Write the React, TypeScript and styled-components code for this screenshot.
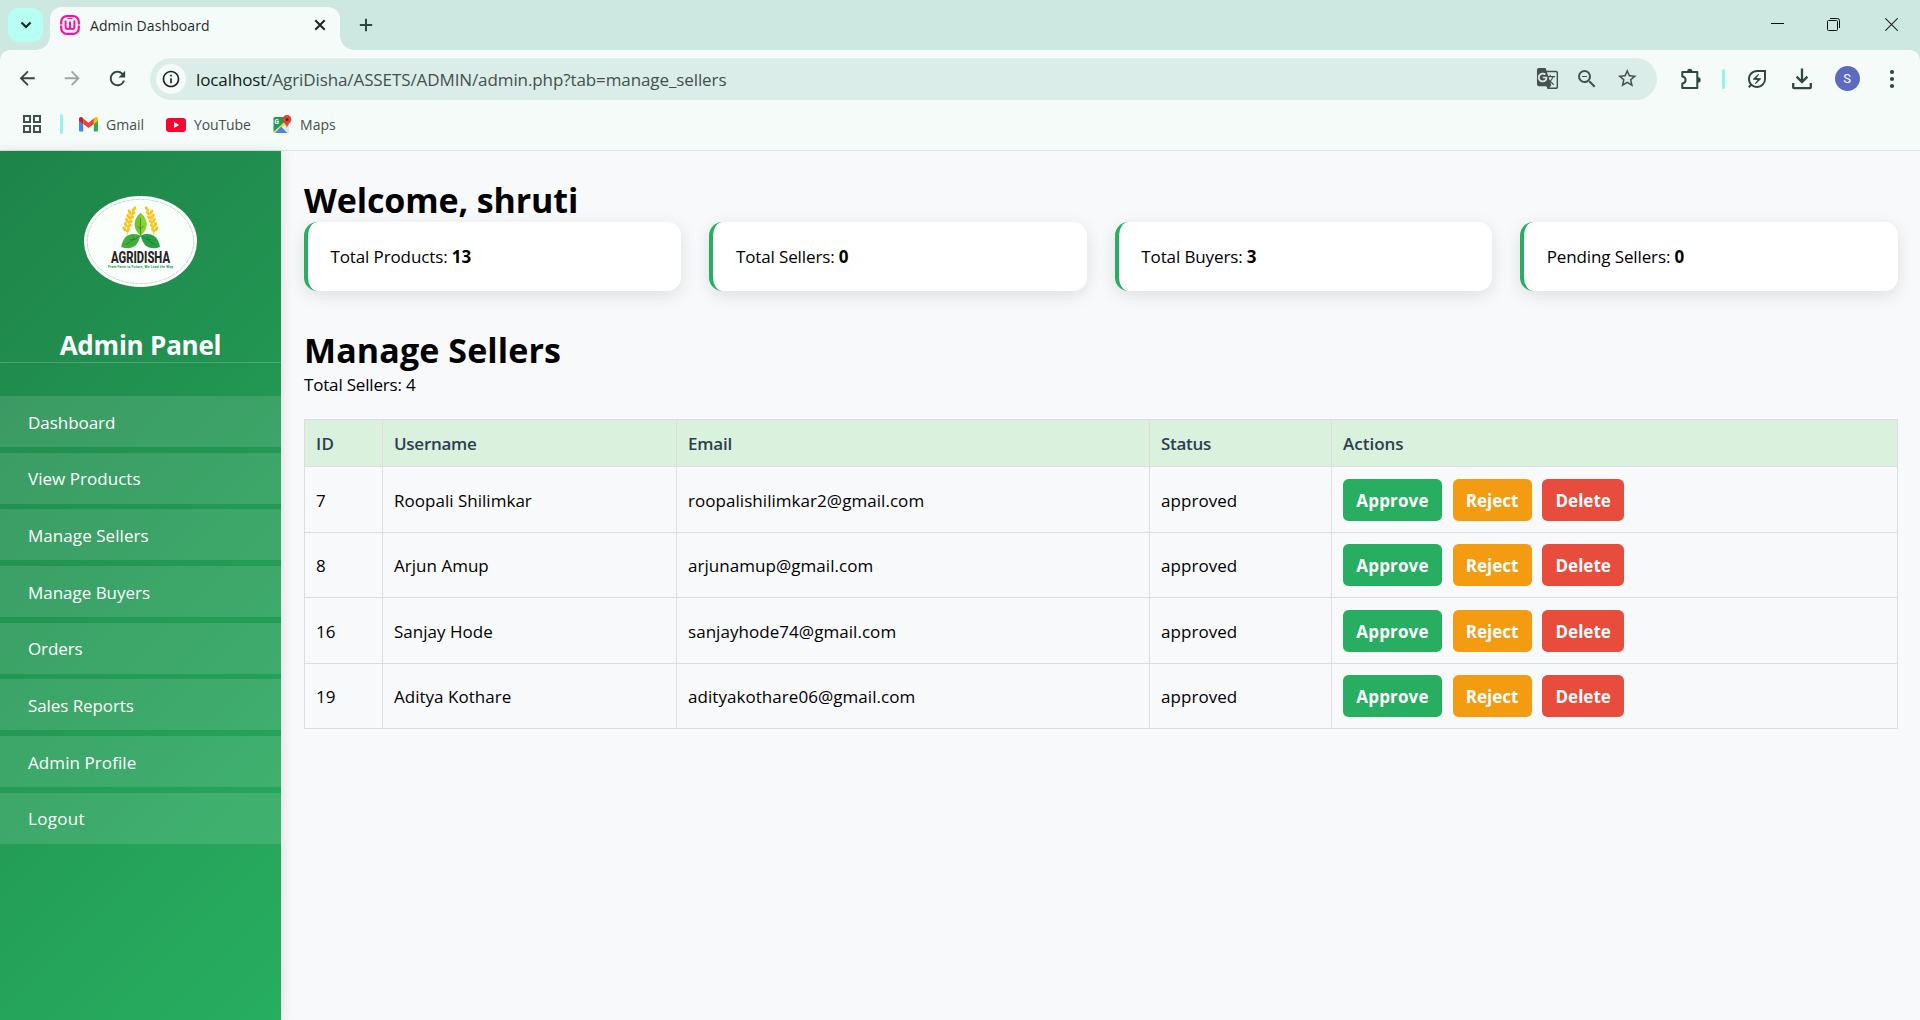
import React from 'react';
import styled, { createGlobalStyle } from 'styled-components';
import {
  MdArrowBack,
  MdArrowForward,
  MdRefresh,
  MdInfoOutline,
  MdGTranslate,
  MdZoomOut,
  MdStarBorder,
  MdOutlineEnergySavingsLeaf,
  MdOutlineGridView,
} from 'react-icons/md';

const GlobalStyle = createGlobalStyle`
  *, *::before, *::after { box-sizing: border-box; }
  body {
    margin: 0;
    overflow: hidden;
    font-family: "Open Sans", "Noto Sans", sans-serif;
    font-size: 17px;
    color: #000;
    background: #f8f9fb;
  }
`;

const Window = styled.div`
  display: flex;
  flex-direction: column;
  height: 1020px;
  background: #cde8e1;
`;

/* ---------- browser frame ---------- */

const TabStrip = styled.div`
  display: flex;
  height: 50px;
  padding-left: 8px;
`;

const TabSearch = styled.div`
  display: flex;
  align-items: center;
  justify-content: center;
  width: 35px;
  height: 34px;
  margin: 8px 7px 0 0;
  border-radius: 11px;
  background: #b5fff3;
`;

const Tab = styled.div`
  position: relative;
  display: flex;
  align-items: center;
  width: 290px;
  height: 43px;
  margin-top: 7px;
  padding: 0 12px 7px 10px;
  border-radius: 12px 12px 0 0;
  background: #f5fbf8;

  &::before,
  &::after {
    content: "";
    position: absolute;
    bottom: 0;
    width: 14px;
    height: 14px;
  }
  &::before {
    right: 100%;
    background: radial-gradient(circle at 0 0, transparent 13.5px, #f5fbf8 14px);
  }
  &::after {
    left: 100%;
    background: radial-gradient(circle at 100% 0, transparent 13.5px, #f5fbf8 14px);
  }
`;

const TabTitle = styled.span`
  flex: 1;
  margin-left: 10px;
  font-size: 14px;
  letter-spacing: 0.08px;
  color: #1f2b28;
`;

const NewTab = styled.div`
  display: flex;
  align-items: center;
  justify-content: center;
  width: 28px;
  margin-left: 12px;
`;

const WindowControls = styled.div`
  display: flex;
  margin-left: auto;
`;

const WindowButton = styled.div<{ $w: number }>`
  display: flex;
  align-items: center;
  justify-content: center;
  width: ${(p) => p.$w}px;
  height: 49px;
`;

const BrowserBar = styled.div`
  display: flex;
  flex-direction: column;
  height: 101px;
  border-bottom: 1px solid #d7e4e1;
  border-radius: 10px 10px 0 0;
  background: #f5fbf8;
`;

const Toolbar = styled.div`
  display: flex;
  align-items: center;
  height: 58px;
  padding-left: 5px;
`;

const IconSlot = styled.div<{ $w: number; $color?: string }>`
  display: flex;
  flex: none;
  align-items: center;
  justify-content: center;
  width: ${(p) => p.$w}px;
  padding-bottom: 1px;
  color: ${(p) => p.$color ?? '#2f4743'};
`;

const Omnibox = styled.div`
  display: flex;
  align-items: center;
  width: 1507px;
  height: 42px;
  margin-left: 10px;
  padding: 0 10px 0 6px;
  border-radius: 21px;
  background: #dbede8;
`;

const SiteInfo = styled.div`
  display: flex;
  align-items: center;
  justify-content: center;
  width: 30px;
  height: 30px;
  margin-right: 10px;
  border-radius: 50%;
  background: #f5fbf8;
  color: #1b2624;
`;

const Url = styled.span`
  flex: 1;
  letter-spacing: -0.1px;
  color: #44504d;

  b {
    font-weight: 400;
    color: #121a18;
  }
`;

const Divider = styled.i<{ $h: number }>`
  flex: none;
  width: 3px;
  height: ${(p) => p.$h}px;
  border-radius: 2px;
  background: #97f3e7;
`;

const Avatar = styled.div`
  width: 25px;
  height: 25px;
  border-radius: 50%;
  background: #5c6bc0;
  color: #fff;
  font: 13px/25px Roboto, sans-serif;
  text-align: center;
`;

const Bookmarks = styled.div`
  display: flex;
  align-items: center;
  height: 33px;
  padding-left: 20px;
`;

const Bookmark = styled.div<{ $w: number; $ls: number }>`
  display: flex;
  align-items: center;
  gap: 8px;
  width: ${(p) => p.$w}px;
  font-size: 14px;
  letter-spacing: ${(p) => p.$ls}px;
  color: #42504d;
`;

/* ---------- page ---------- */

const Page = styled.div`
  display: flex;
  flex: 1;
  background: #f8f9fb;
`;

const Sidebar = styled.aside`
  display: flex;
  flex-direction: column;
  flex: none;
  width: 281px;
  padding-top: 45px;
  background: linear-gradient(135deg, #1e8449, #27ae60);
  box-shadow: 2px 0 11px rgba(0, 0, 0, 0.1);
  color: #fff;
`;

const LogoFrame = styled.div`
  width: 113px;
  height: 91px;
  margin: 0 auto;
`;

const PanelTitle = styled.h2`
  height: 37px;
  margin: 39px 0 33px;
  border-bottom: 1px solid rgba(255, 255, 255, 0.2);
  font-size: 26px;
  line-height: 38px;
  letter-spacing: -0.22px;
  text-align: center;
`;

const Nav = styled.nav`
  display: flex;
  flex-direction: column;
  gap: 5.67px;
`;

const NavLink = styled.a<{ $ls: number }>`
  height: 51px;
  padding: 0.8px 0 0 28px;
  background: rgba(255, 255, 255, 0.12);
  line-height: 52px;
  letter-spacing: ${(p) => p.$ls}px;
`;

const Main = styled.main`
  flex: 1;
  min-width: 0;
  padding: 23px 22.5px 0 23px;
`;

const Heading = styled.h1<{ $ls: number }>`
  height: 48px;
  margin: 0;
  font-size: 34px;
  line-height: 52px;
  letter-spacing: ${(p) => p.$ls}px;
`;

const Cards = styled.div`
  display: grid;
  grid-template-columns: repeat(4, 1fr);
  gap: 28.125px;
  margin-bottom: 33px;
`;

const Card = styled.div`
  height: 69px;
  padding-left: 22.5px;
  border-left: 4px solid #27ae60;
  border-radius: 13.5px;
  background: #fff;
  box-shadow: 0 4.5px 17px rgba(0, 0, 0, 0.11);
  line-height: 70px;
  letter-spacing: -0.12px;
`;

const Summary = styled.p`
  height: 24px;
  margin: 0 0 23px;
  line-height: 26px;
  letter-spacing: -0.18px;
`;

const Table = styled.table`
  width: 100%;
  border-collapse: collapse;
  table-layout: fixed;

  th,
  td {
    padding: 0 0 0 11px;
    border: 1px solid #dddddf;
    text-align: left;
  }
  th {
    height: 47px;
    background: #daf1de;
    color: #2c3e50;
    font-weight: 600;
  }
  tbody tr:nth-child(odd) td {
    height: 66px;
  }
  tbody tr:nth-child(even) td {
    height: 65px;
  }
`;

const CellText = styled.span<{ $ls: number; $drop?: number }>`
  display: block;
  padding-top: ${(p) => p.$drop ?? 1}px;
  letter-spacing: ${(p) => p.$ls}px;
`;

const Actions = styled.div`
  display: flex;
  gap: 10.6px;
`;

const ActionButton = styled.button<{ $bg: string; $w: number; $ls: number }>`
  width: ${(p) => p.$w}px;
  height: 42px;
  padding: 1px 0 0;
  border: 0;
  border-radius: 5.6px;
  background: ${(p) => p.$bg};
  color: #fff;
  font: 700 17px/41px "Open Sans", "Noto Sans", sans-serif;
  letter-spacing: ${(p) => p.$ls}px;
`;

/* ---------- drawings ---------- */

const Favicon = () => (
  <svg width="20" height="20" viewBox="0 0 20 20" fill="none" stroke="#fb0fa3">
    <rect x="1.2" y="1.2" width="17.6" height="17.6" rx="5.6" strokeWidth="2.2" />
    <path d="M5.6 5.4v6.6q0 2 2.1 2t2.3-2V6.4v5.6q0 2 2.2 2t2.2-2V5.4" strokeWidth="2" />
    <path d="M0 10h3.6M16.4 10H20" stroke="#f5fbf8" strokeWidth="1.2" />
    <path d="M7.4 3.6h5.2" strokeWidth="1" />
  </svg>
);

const ExtensionIcon = () => (
  <svg width="22" height="22" viewBox="0 0 22 22" fill="none" stroke="currentColor" strokeWidth="2" strokeLinejoin="round">
    <path d="M3.3 4h15v16h-15v-4.6c4.4-.6 4.400-6.200 0-6.800z" />
    <path d="M8.2 3.4a2.6 2.6 0 0 1 5.2 0zM19 9.2a2.6 2.6 0 0 1 0 5.4z" fill="currentColor" stroke="none" />
  </svg>
);

const DownloadIcon = () => (
  <svg width="22" height="22" viewBox="0 0 22 22" fill="none" stroke="currentColor" strokeWidth="2.3">
    <path d="M11 .5v13M5.6 8.6 11 14l5.4-5.4M2.2 15v4.2q0 .9.9.9h15.8q.9 0 .9-.9V15" />
  </svg>
);

const MenuDots = () => (
  <svg width="6" height="20" viewBox="0 0 6 20" fill="currentColor">
    <circle cx="3" cy="3" r="2.1" />
    <circle cx="3" cy="10" r="2.1" />
    <circle cx="3" cy="17" r="2.1" />
  </svg>
);

const GmailIcon = () => (
  <svg width="19" height="15" viewBox="0 0 19 15">
    <path d="M0 3v10.4Q0 14.5 1.2 14.5h3V6z" fill="#4285f4" />
    <path d="M19 3v10.4q0 1.1-1.2 1.1h-3V6z" fill="#34a853" />
    <path d="M14.8 1.6V7L19 3.8V2c0-1.9-2-2.5-3.2-1.5z" fill="#fbbc04" />
    <path d="M0 3.8 4.2 7V1.6L3.2.6C2-.5 0 .3 0 2z" fill="#c5221f" />
    <path d="M4.2 1.6 9.5 5.7l5.3-4.1V7L9.5 11 4.2 7z" fill="#ea4335" />
  </svg>
);

const YouTubeIcon = () => (
  <svg width="20" height="14" viewBox="0 0 20 14">
    <rect width="20" height="14" rx="3.2" fill="#ff0033" />
    <path d="M8 4v6l5.2-3z" fill="#fff" />
  </svg>
);

const MapsIcon = () => (
  <svg width="19" height="19" viewBox="0 0 19 19">
    <rect x="0.5" y="2" width="15.5" height="16" rx="1.5" fill="#f1f3f4" />
    <path d="M2 2h10.5L14 5 .5 17V3.5Q.5 2 2 2z" fill="#1e9b57" />
    <path d="M12.5 6 .7 17.4l1 .8L13.5 9z" fill="#fdd835" />
    <path d="M8.2 11.5 14.5 18H2z" fill="#4285f4" />
    <path d="M10 13.2 15 18.2h1V9.5z" fill="#dfe4e8" />
    <path d="M14 0a4.4 4.4 0 0 0-4.4 4.5c0 3.2 3.6 4 4.4 8.5.8-4.5 4.4-5.3 4.4-8.5A4.4 4.4 0 0 0 14 0z" fill="#e04437" />
    <circle cx="14" cy="4.5" r="1.5" fill="#7b1f1a" />
    <text x="1.6" y="9" fontFamily="Roboto, sans-serif" fontSize="6.5" fontWeight="700" fill="#fff">G</text>
  </svg>
);

const wheatGrains = [0, 1, 2, 3, 4];

const Wheat = () => (
  <g fill="#fbc312">
    <path d="M49.5 14Q43 24 43 42" fill="none" stroke="#fbc312" strokeWidth="0.8" />
    <ellipse cx="50" cy="13" rx="1.5" ry="3" transform="rotate(35 50 13)" />
    {wheatGrains.map((i) => (
      <g key={i} transform={`translate(${47.6 - i * 1.3} ${16.4 + i * 4.2})`}>
        <ellipse cx="-2" cy="-0.4" rx="1.5" ry="2.7" transform="rotate(-28 -2 -0.4)" />
        <ellipse cx="1.5" cy="1" rx="1.4" ry="2.6" transform="rotate(50 1.5 1)" />
      </g>
    ))}
  </g>
);

const AgriDishaLogo = () => (
  <svg width="113" height="91" viewBox="0 0 113 91">
    <ellipse cx="56.5" cy="45.5" rx="56.5" ry="45.5" fill="#fff" />
    <ellipse cx="56.5" cy="45.5" rx="53.2" ry="42.2" fill="#fafffc" stroke="#8cc6a6" strokeWidth="0.6" strokeDasharray="4 0.8" />
    <Wheat />
    <g transform="translate(113 0) scale(-1 1)">
      <Wheat />
    </g>
    <path d="M56.5 17C48.5 23.5 48.5 33 56.5 39.5 64.5 33 64.5 23.5 56.5 17z" fill="#72c52c" />
    <path d="M56.5 17C64.5 23.5 64.5 33 56.5 39.5z" fill="#8ad22d" />
    <path d="M56 39.5C47 35.5 38.5 40 37.3 51 46 54.5 54.5 51 56 39.5z" fill="#3fae3c" />
    <path d="M57 39.5C66 35.5 74.5 40 76 51 67 54.5 58.5 51 57 39.5z" fill="#27a044" />
    <path d="M56.5 22v19M56 40 42 48.5M57 40l14 8.5M56.5 33l-3-3M56.5 33l3-3M50 43.5l-1-3M50 43.5l-4 0M63 43.5l1-3M63 43.5l4 0" fill="none" stroke="#15702f" strokeWidth="0.6" />
    <text x="27" y="67.2" fontFamily="Roboto, sans-serif" fontSize="16" fontWeight="800" fill="#262322" textLength="59" lengthAdjust="spacingAndGlyphs">AGRIDISHA</text>
    <text x="24" y="72" fontFamily="Roboto, sans-serif" fontSize="3.4" fontWeight="700" fill="#219653" textLength="66">From Farm to Future, We Lead the Way.</text>
  </svg>
);

/* ---------- data ---------- */

const navItems = [
  { label: 'Dashboard', ls: -0.04 },
  { label: 'View Products', ls: 0.04 },
  { label: 'Manage Sellers', ls: 0.06 },
  { label: 'Manage Buyers', ls: -0.02 },
  { label: 'Orders', ls: -0.11 },
  { label: 'Sales Reports', ls: -0.08 },
  { label: 'Admin Profile', ls: 0.08 },
  { label: 'Logout', ls: 0.3 },
];

const stats = [
  { label: 'Total Products', value: 13 },
  { label: 'Total Sellers', value: 0 },
  { label: 'Total Buyers', value: 3 },
  { label: 'Pending Sellers', value: 0 },
];

const columns = [
  { label: 'ID', width: 78, ls: 0.3 },
  { label: 'Username', width: 294, ls: -0.27 },
  { label: 'Email', width: 473, ls: -0.2 },
  { label: 'Status', width: 182, ls: -0.3 },
  { label: 'Actions', width: 566, ls: 0 },
];

const sellers = [
  { id: 7, name: 'Roopali Shilimkar', email: 'roopalishilimkar2@gmail.com' },
  { id: 8, name: 'Arjun Amup', email: 'arjunamup@gmail.com' },
  { id: 16, name: 'Sanjay Hode', email: 'sanjayhode74@gmail.com' },
  { id: 19, name: 'Aditya Kothare', email: 'adityakothare06@gmail.com' },
];

const Chrome = () => (
  <>
    <TabStrip>
      <TabSearch>
        <svg width="12" height="8" viewBox="0 0 12 8" fill="none" stroke="#14211e" strokeWidth="2.2">
          <path d="M1.5 1.5 6 6l4.5-4.5" />
        </svg>
      </TabSearch>
      <Tab>
        <Favicon />
        <TabTitle>Admin Dashboard</TabTitle>
        <svg width="16" height="12" viewBox="0 0 16 12" stroke="#1b2624" strokeWidth="2">
          <path d="M3.3 1.3l9.4 9.4M12.7 1.3 3.3 10.7" />
        </svg>
      </Tab>
      <NewTab>
        <svg width="14" height="14" viewBox="0 0 14 14" stroke="#2f4743" strokeWidth="2">
          <path d="M7 .8v12.4M.8 7h12.4" />
        </svg>
      </NewTab>
      <WindowControls>
        <WindowButton $w={54}>
          <svg width="13" height="13" viewBox="0 0 13 13"><path d="M0 5.5h13" stroke="#000" /></svg>
        </WindowButton>
        <WindowButton $w={58}>
          <svg width="13" height="13" viewBox="0 0 13 13" fill="none" stroke="#111">
            <rect x="0.5" y="2.5" width="10" height="10" rx="1" />
            <path d="M3 .5h7.5q2 0 2 2V10" />
          </svg>
        </WindowButton>
        <WindowButton $w={58}>
          <svg width="13" height="13" viewBox="0 0 13 13" stroke="#222" strokeWidth="1.1">
            <path d="M.3.3l12.4 12.4M12.7.3.3 12.7" />
          </svg>
        </WindowButton>
      </WindowControls>
    </TabStrip>
    <BrowserBar>
      <Toolbar>
        <IconSlot $w={45}><MdArrowBack size={22.5} /></IconSlot>
        <IconSlot $w={44} $color="#9ba5a2"><MdArrowForward size={22.5} /></IconSlot>
        <IconSlot $w={46}><MdRefresh size={23} /></IconSlot>
        <Omnibox>
          <SiteInfo><MdInfoOutline size={20} /></SiteInfo>
          <Url><b>localhost</b>/AgriDisha/ASSETS/ADMIN/admin.php?tab=manage_sellers</Url>
          <IconSlot $w={40} $color="#46504e"><MdGTranslate size={23} /></IconSlot>
          <IconSlot $w={40} $color="#46504e"><MdZoomOut size={24} /></IconSlot>
          <IconSlot $w={40} $color="#46504e"><MdStarBorder size={22.5} /></IconSlot>
        </Omnibox>
        <IconSlot $w={65}><ExtensionIcon /></IconSlot>
        <Divider $h={20} />
        <IconSlot $w={64}><MdOutlineEnergySavingsLeaf size={24} /></IconSlot>
        <IconSlot $w={26}><DownloadIcon /></IconSlot>
        <IconSlot $w={64}><Avatar>S</Avatar></IconSlot>
        <IconSlot $w={26}><MenuDots /></IconSlot>
      </Toolbar>
      <Bookmarks>
        <IconSlot $w={24} $color="#42504d"><MdOutlineGridView size={24} /></IconSlot>
        <IconSlot $w={35}><Divider $h={20} /></IconSlot>
        <Bookmark $w={87} $ls={0}><GmailIcon /><span>Gmail</span></Bookmark>
        <Bookmark $w={107} $ls={-0.12}><YouTubeIcon />YouTube</Bookmark>
        <Bookmark $w={80} $ls={0.05}><MapsIcon />Maps</Bookmark>
      </Bookmarks>
    </BrowserBar>
  </>
);

export default function App() {
  return (
    <Window>
      <GlobalStyle />
      <Chrome />
      <Page>
        <Sidebar>
          <LogoFrame><AgriDishaLogo /></LogoFrame>
          <PanelTitle>Admin Panel</PanelTitle>
          <Nav>
            {navItems.map((item) => (
              <NavLink key={item.label} $ls={item.ls}>{item.label}</NavLink>
            ))}
          </Nav>
        </Sidebar>
        <Main>
          <Heading $ls={-0.12}>Welcome, shruti</Heading>
          <Cards>
            {stats.map((stat) => (
              <Card key={stat.label}>{stat.label}: <b>{stat.value}</b></Card>
            ))}
          </Cards>
          <Heading $ls={0.1}>Manage Sellers</Heading>
          <Summary>Total Sellers: 4</Summary>
          <Table>
            <colgroup>
              {columns.map((c) => <col key={c.label} width={c.width} />)}
            </colgroup>
            <thead>
              <tr>
                {columns.map((c) => (
                  <th key={c.label}><CellText $ls={c.ls} $drop={0}>{c.label}</CellText></th>
                ))}
              </tr>
            </thead>
            <tbody>
              {sellers.map((s) => (
                <tr key={s.id}>
                  <td><CellText $ls={0}>{s.id}</CellText></td>
                  <td><CellText $ls={0.02}>{s.name}</CellText></td>
                  <td><CellText $ls={0.05}>{s.email}</CellText></td>
                  <td><CellText $ls={0.05}>approved</CellText></td>
                  <td>
                    <Actions>
                      <ActionButton $bg="#27ae60" $w={99} $ls={0.15}>Approve</ActionButton>
                      <ActionButton $bg="#f39c12" $w={79} $ls={0}>Reject</ActionButton>
                      <ActionButton $bg="#e74c3c" $w={82} $ls={0}>Delete</ActionButton>
                    </Actions>
                  </td>
                </tr>
              ))}
            </tbody>
          </Table>
        </Main>
      </Page>
    </Window>
  );
}
